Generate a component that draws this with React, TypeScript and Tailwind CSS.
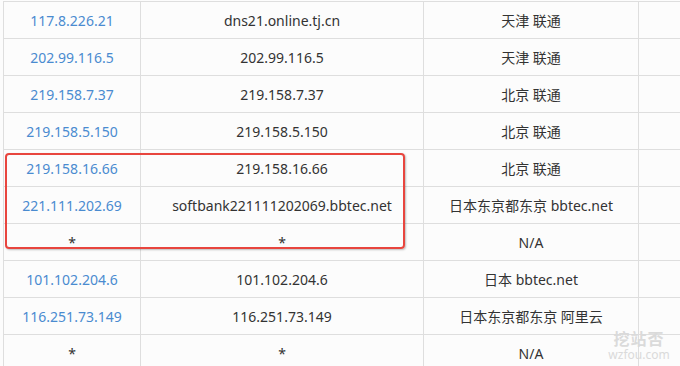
import React from 'react'

const rows: [string, string, string][] = [
  ['117.8.226.21', 'dns21.online.tj.cn', '天津 联通'],
  ['202.99.116.5', '202.99.116.5', '天津 联通'],
  ['219.158.7.37', '219.158.7.37', '北京 联通'],
  ['219.158.5.150', '219.158.5.150', '北京 联通'],
  ['219.158.16.66', '219.158.16.66', '北京 联通'],
  ['221.111.202.69', 'softbank221111202069.bbtec.net', '日本东京都东京 bbtec.net'],
  ['*', '*', 'N/A'],
  ['101.102.204.6', '101.102.204.6', '日本 bbtec.net'],
  ['116.251.73.149', '116.251.73.149', '日本东京都东京 阿里云'],
  ['*', '*', 'N/A'],
]

function App() {
  return (
    <div
      className="relative w-[680px] h-[366px] overflow-hidden bg-[#fcfcfc] text-[14px] text-[#333]"
      style={{ fontFamily: '"Noto Sans", "Noto Sans CJK SC", sans-serif' }}
    >
      <div className="ml-[3px] mt-px border-t border-l border-[#dedede]">
        {rows.map((r, i) => (
          <div key={i} className="flex h-[37px] border-b border-[#dedede]">
            <div
              className={
                'w-[137px] shrink-0 border-r border-[#dedede] flex items-center justify-center ' +
                (r[0] === '*' ? 'text-[#333]' : 'text-[#4a8bd0]')
              }
            >
              {r[0]}
            </div>
            <div className="w-[283px] shrink-0 border-r border-[#dedede] flex items-center justify-center">
              {r[1]}
            </div>
            <div className="w-[215px] shrink-0 border-r border-[#dedede] flex items-center justify-center">
              {r[2]}
            </div>
            <div className="flex-1" />
          </div>
        ))}
      </div>

      <div className="absolute left-[5px] top-[153px] w-[400px] h-[96px] border-2 border-[#e8453e] rounded-[4px] shadow-[1px_1px_2px_rgba(0,0,0,0.25)]" />

      <div className="absolute left-[604px] top-[331px] w-[70px] flex flex-col items-center gap-[2px] text-[#dadada]">
        <span className="block leading-none text-[16px] font-bold tracking-[1px]">挖站否</span>
        <span className="block leading-none text-[12px]">wzfou.com</span>
      </div>
    </div>
  )
}

export default App
